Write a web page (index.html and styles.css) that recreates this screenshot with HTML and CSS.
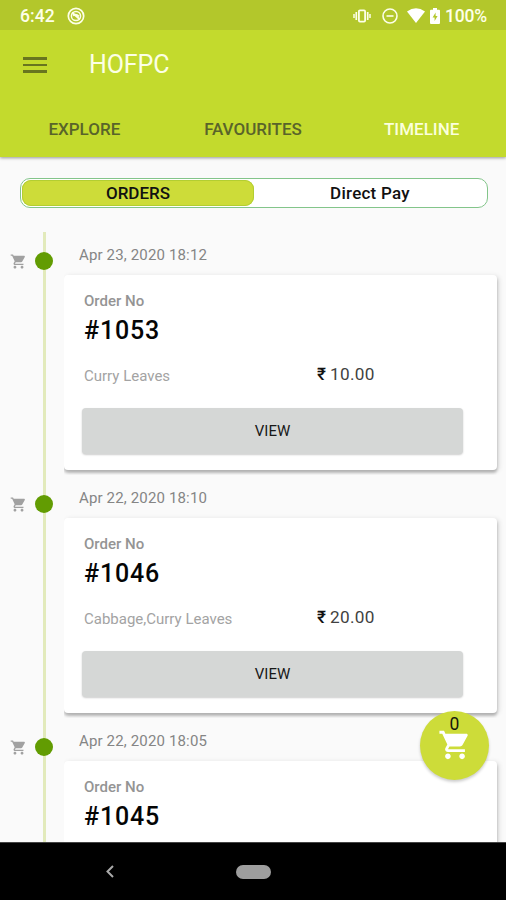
FILE: index.html
```
<!DOCTYPE html>
<html lang="en">
<head>
<meta charset="utf-8">
<title>HOFPC</title>
<link rel="stylesheet" href="styles.css">
</head>
<body>
<svg class="defs" width="0" height="0"><symbol id="cart" viewBox="0 0 24 24"><path d="M7 18c-1.1 0-1.99.9-1.99 2S5.900 22 7 22s2-.9 2-2-.9-2-2-2zM1 2v2h2l3.600 7.590-1.350 2.450c-.16.28-.25.61-.25.960 0 1.100.9 2 2 2h12v-2H7.420c-.14 0-.25-.11-.25-.25l.03-.12.9-1.630h7.450c.75 0 1.410-.41 1.750-1.030l3.580-6.490c.08-.14.12-.31.12-.48 0-.55-.45-1-1-1H5.210l-.94-2H1zm16 16c-1.100 0-1.990.9-1.990 2s.89 2 1.990 2 2-.9 2-2-.9-2-2-2z"/></symbol></svg>
<div class="screen">
  <header class="header">
    <div class="status">
      <span class="clock">6:42</span>
      <svg class="app-icon" viewBox="0 0 18 18" fill="none" stroke="currentColor"><circle cx="9" cy="9" r="7.700" stroke-width="1.700"/><circle cx="9" cy="9" r="4.600" stroke-width="1.500"/><path d="M5 5.500l8 7M6 8.500q3-2 6 1" stroke-width="1.800"/></svg>
      <svg class="vibrate" viewBox="0 0 18 14" fill="none" stroke="currentColor"><rect x="5.900" y="1.400" width="6.200" height="11.200" rx="1" stroke-width="1.800"/><path d="M3.300 3v8M14.700 3v8" stroke-width="1.700"/><path d="M1 5v4M17 5v4" stroke-width="1.500"/></svg>
      <svg class="dnd" viewBox="0 0 16 16" fill="none" stroke="currentColor" stroke-width="1.600"><circle cx="8" cy="8" r="7"/><path d="M4.500 8h7"/></svg>
      <svg class="wifi" viewBox="0 0 18 15" fill="currentColor"><path d="M0 3.500Q9-3 18 3.500L9 15z"/></svg>
      <svg class="battery" viewBox="0 0 10 16"><path fill="currentColor" d="M3 0h4v1.700h2q1 0 1 1V15q0 1-1 1H1q-1 0-1-1V2.700q0-1 1-1h2z"/><path class="bolt" d="M5.600 4.500L2.600 9.500h2v3.500l3-5h-2z"/></svg>
      <span class="percent">100%</span>
    </div>
    <div class="toolbar">
      <div class="burger"><i></i><i></i><i></i></div>
      <h1>HOFPC</h1>
    </div>
    <nav class="tabs"><a>EXPLORE</a><a>FAVOURITES</a><a class="active">TIMELINE</a></nav>
  </header>
  <main class="content">
    <div class="segment"><button class="selected">ORDERS</button><button>Direct Pay</button></div>
    <section class="timeline">
      <article class="entry">
        <div class="rail"><svg class="mini"><use href="#cart"/></svg><i class="dot"></i></div>
        <div class="body">
          <time>Apr 23, 2020 18:12</time>
          <div class="card">
            <div class="label">Order No</div>
            <div class="number">#1053</div>
            <div class="detail"><span class="items">Curry Leaves</span><span class="price"><b>₹</b>10.00</span></div>
            <button class="view">VIEW</button>
          </div>
        </div>
      </article>
      <article class="entry">
        <div class="rail"><svg class="mini"><use href="#cart"/></svg><i class="dot"></i></div>
        <div class="body">
          <time>Apr 22, 2020 18:10</time>
          <div class="card">
            <div class="label">Order No</div>
            <div class="number">#1046</div>
            <div class="detail"><span class="items">Cabbage,Curry Leaves</span><span class="price"><b>₹</b>20.00</span></div>
            <button class="view">VIEW</button>
          </div>
        </div>
      </article>
      <article class="entry">
        <div class="rail"><svg class="mini"><use href="#cart"/></svg><i class="dot"></i></div>
        <div class="body">
          <time>Apr 22, 2020 18:05</time>
          <div class="card">
            <div class="label">Order No</div>
            <div class="number">#1045</div>
          </div>
        </div>
      </article>
    </section>
    <div class="fab"><span>0</span><svg><use href="#cart"/></svg></div>
  </main>
  <footer class="navbar">
    <svg class="back" viewBox="0 0 8 13" fill="none" stroke="currentColor" stroke-width="2"><path d="M7 1L1.500 6.500 7 12"/></svg>
    <i class="home"></i>
  </footer>
</div>
</body>
</html>
```
FILE: styles.css
```
* { box-sizing: border-box; }
body { margin: 0; font-family: Roboto, "Noto Sans", sans-serif; background: #fafafa; }
.defs { position: absolute; }
button { border: 0; padding: 0; background: none; font-family: inherit; color: inherit; }
.screen { width: 506px; height: 900px; display: flex; flex-direction: column; overflow: hidden; }

.header { height: 157px; flex: none; background: #c3da2d; box-shadow: 0 1px 3px rgba(0,0,0,.4); z-index: 2; }
.status { height: 30px; background: #b3c72b; color: #fdffe8; display: flex; align-items: center; padding: 1px 18px 0 20px; font-size: 17.500px; font-weight: 500; }
.clock { width: 47px; letter-spacing: .1px; }
.app-icon { width: 18px; height: 18px; }
.vibrate { width: 18px; height: 14px; margin-left: auto; }
.dnd { width: 16px; height: 16px; margin-left: 11px; }
.wifi { width: 18px; height: 15px; margin-left: 9px; color: #fff; }
.battery { width: 10px; height: 16px; margin-left: 5px; color: #fff; }
.bolt { fill: #b3c72b; }
.percent { margin-left: 5px; width: 43px; white-space: nowrap; letter-spacing: -.2px; }
.toolbar { height: 70px; display: flex; align-items: center; padding-left: 23px; }
.burger { width: 24px; display: flex; flex-direction: column; gap: 4px; }
.burger i { height: 2.500px; background: #68751f; }
h1 { margin: 0 0 0 42px; font-size: 25px; line-height: 30px; font-weight: 400; color: #fcffe5; letter-spacing: -.1px; }
.tabs { height: 57px; display: grid; grid-template-columns: repeat(3, 1fr); text-align: center; line-height: 58px; font-size: 17px; font-weight: 500; color: #59642a; }
.tabs .active { color: #fbffdc; }

.content { height: 685px; flex: none; position: relative; overflow: hidden; padding-top: 21px; }
.segment { width: 468px; height: 30px; margin-left: 20px; display: flex; border: 1.500px solid #83c58a; border-radius: 10px; background: #fff; padding: 1px; font-size: 17px; color: #111; }
.segment button { flex: 1; border-radius: 9px; font-size: 17px; font-weight: 500; line-height: 26px; letter-spacing: .25px; }
.segment .selected { background: #cddc39; box-shadow: inset 0 0 0 1px #b3ce31; letter-spacing: 0; }
.timeline { margin-top: 24px; background: linear-gradient(#e2eabb, #e2eabb) 43px 0 / 3px 100% no-repeat; }
.entry { height: 243px; display: flex; }
.rail { width: 64px; height: 58px; display: flex; align-items: center; padding-left: 10px; flex: none; }
.mini { width: 17px; height: 17px; fill: #a1a1a1; }
.dot { width: 18px; height: 18px; border-radius: 50%; background: #629c02; margin-left: 8px; }
.body { width: 442px; overflow: hidden; padding-right: 9px; }
time { display: block; height: 43px; padding: 13px 0 0 15px; font-size: 15px; line-height: 20px; color: #858585; letter-spacing: .15px; }
.card { height: 195px; background: #fff; border-radius: 4px; box-shadow: 0 3px 3px rgba(0,0,0,.24), 2px 1px 5px rgba(0,0,0,.12); padding: 16px 34px 0 18px; }
.label { font-size: 15px; line-height: 20px; font-weight: 500; color: #949494; padding-left: 2px; }
.number { font-size: 25px; line-height: 30px; font-weight: 500; color: #050505; letter-spacing: .8px; margin-top: 5px; padding-left: 2px; }
.detail { display: flex; height: 24px; margin-top: 16px; align-items: center; padding-left: 2px; }
.items { width: 233px; font-size: 15px; color: #a3a3a3; padding-top: 3px; }
.price { font-size: 17.200px; color: #414141; letter-spacing: .3px; display: flex; align-items: center; }
.price b { width: 13px; font-weight: 500; color: #111; }
.view { display: block; width: 381px; height: 46px; margin-top: 22px; border-radius: 4px; background: #d5d7d6; box-shadow: 0 1px 2px rgba(0,0,0,.2); font-size: 15px; font-weight: 400; color: #181818; }
.fab { position: absolute; left: 420px; top: 554px; width: 69px; height: 69px; border-radius: 50%; background: #cddc39; box-shadow: 0 2px 3px rgba(0,0,0,.2); display: flex; flex-direction: column; align-items: center; }
.fab span { font-size: 17.500px; line-height: 20px; margin-top: 3px; color: #15180b; }
.fab svg { width: 34px; height: 34px; fill: #fff; margin-top: -6px; }

.navbar { height: 58px; flex: none; background: #000; border-top: 1px solid #444; display: flex; align-items: center; z-index: 2; }
.back { width: 8px; height: 13px; color: #aaa; margin-left: 106px; }
.home { width: 35px; height: 14px; border-radius: 7px; background: #9e9e9e; margin-left: 122px; }
```
